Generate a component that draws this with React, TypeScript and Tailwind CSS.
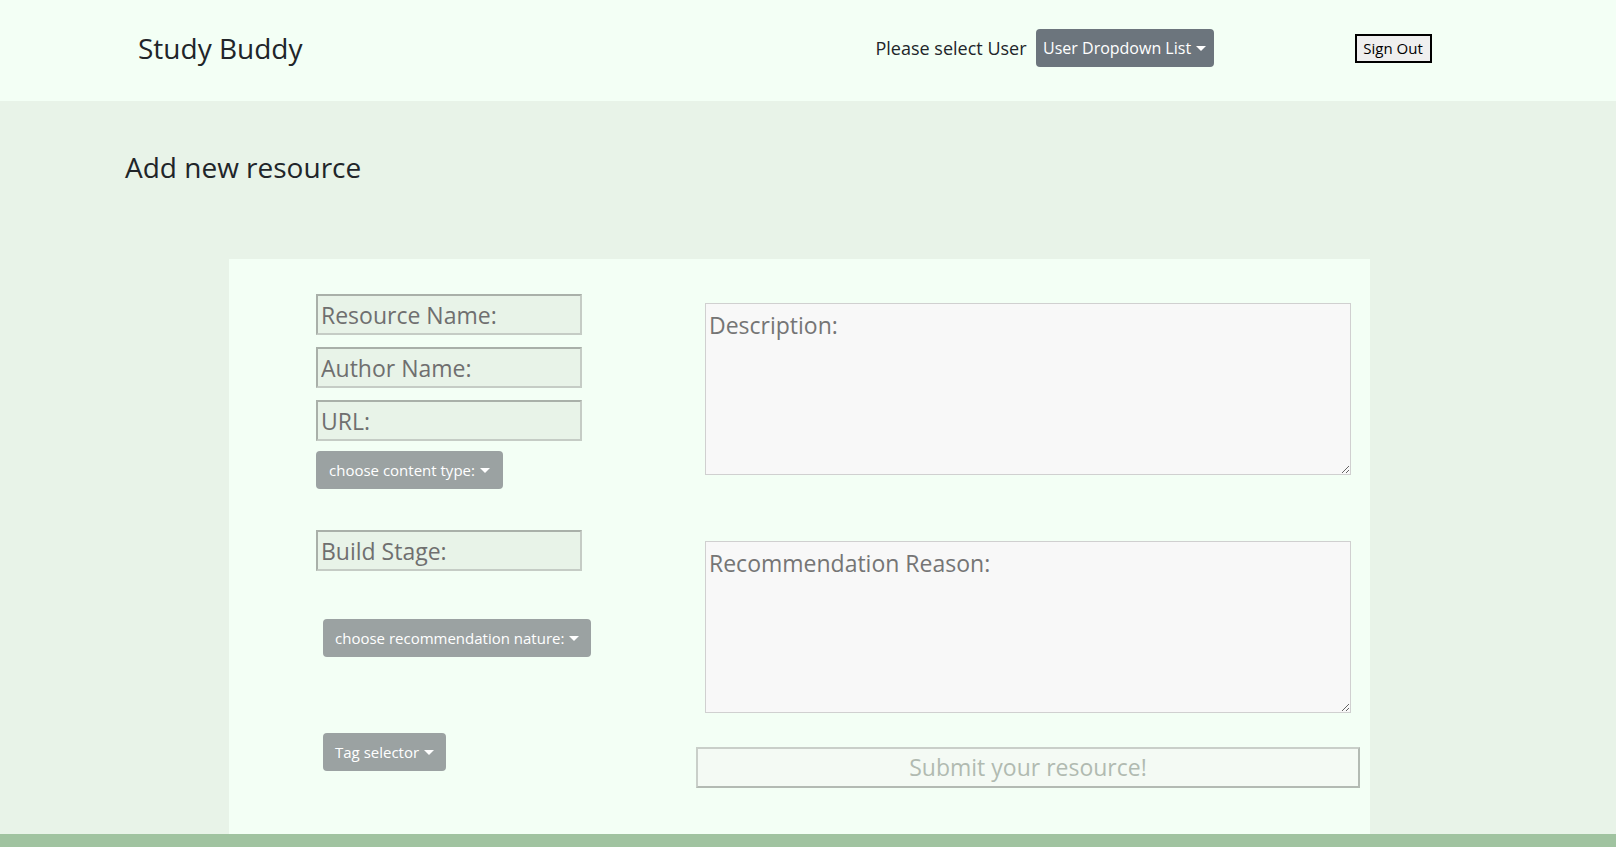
import React from 'react';

const Caret: React.FC = () => (
  <span className="ml-[5px] inline-block h-0 w-0 border-x-[5px] border-t-[5px] border-x-transparent border-t-white align-[3px]" />
);

const inputClass =
  'block h-[41px] w-[266px] border-2 border-t-[#a9b0a9] border-l-[#a9b0a9] border-b-[#c5ccc5] border-r-[#c5ccc5] bg-[#e8f3e8] px-[3px] text-[23px] text-[#555] placeholder:text-[#6f6f6f] outline-none';

const textareaClass =
  'block h-[172px] w-[646px] border border-[#d0d0d0] bg-[#f8f8f8] px-[3px] py-[4px] text-[23px] leading-[1.5] text-[#555] placeholder:text-[#757575] outline-none';

const dropBtnClass =
  'flex h-[38px] w-max shrink-0 items-center whitespace-nowrap rounded-[4px] bg-[#9ba2a2] px-[12px] text-[15px] text-white';

const App: React.FC = () => {
  return (
    <div className="flex min-h-screen flex-col bg-[#e8f3e8] font-['Open_Sans',sans-serif] text-[#212529]">
      {/* Header */}
      <header className="flex h-[101px] items-center bg-[#f3fff5] pb-[5px]">
        <div className="ml-[138px] text-[28px] leading-none">Study Buddy</div>
        <div className="ml-[573px] text-[18px]">Please select User</div>
        <button className="ml-[9px] flex h-[38px] w-[178px] items-center justify-center rounded-[4px] bg-[#6c757d] text-[16px] text-white">
          User Dropdown List
          <Caret />
        </button>
        <button className="ml-[141px] flex h-[29px] w-[77px] items-center justify-center border-2 border-black bg-[#efefef] text-[15px] text-black">
          Sign Out
        </button>
      </header>

      {/* Title */}
      <h1 className="ml-[125px] pt-[48px] text-[28px] leading-[36px]">Add new resource</h1>

      {/* Form card */}
      <form className="ml-[229px] mt-[74px] flex h-[575px] w-[1141px] bg-[#f3fff5]">
        <div className="ml-[87px] flex w-[266px] shrink-0 flex-col items-start pt-[35px]">
          <input className={inputClass} placeholder="Resource Name:" />
          <input className={`${inputClass} mt-[12px]`} placeholder="Author Name:" />
          <input className={`${inputClass} mt-[12px]`} placeholder="URL:" />
          <button type="button" className={`${dropBtnClass} mt-[10px] px-[13px]`}>
            choose content type:
            <Caret />
          </button>
          <input className={`${inputClass} mt-[41px]`} placeholder="Build Stage:" />
          <button type="button" className={`${dropBtnClass} ml-[7px] mt-[48px]`}>
            choose recommendation nature:
            <Caret />
          </button>
          <button type="button" className={`${dropBtnClass} ml-[7px] mt-[76px]`}>
            Tag selector
            <Caret />
          </button>
        </div>

        <div className="ml-[114px] flex w-[664px] shrink-0 flex-col pt-[44px]">
          <textarea className={`${textareaClass} ml-[9px]`} placeholder="Description:" />
          <textarea className={`${textareaClass} ml-[9px] mt-[66px]`} placeholder="Recommendation Reason:" />
          <button
            type="submit"
            className="mt-[34px] h-[41px] w-[664px] border-2 border-t-[#c9cfc9] border-l-[#c9cfc9] border-b-[#b3bab3] border-r-[#b3bab3] bg-[#f4faf4] text-[23px] text-[#b1bab1]"
          >
            Submit your resource!
          </button>
        </div>
      </form>

      <footer className="h-[13px] bg-[#a0c3a0]" />
    </div>
  );
};

export default App;
